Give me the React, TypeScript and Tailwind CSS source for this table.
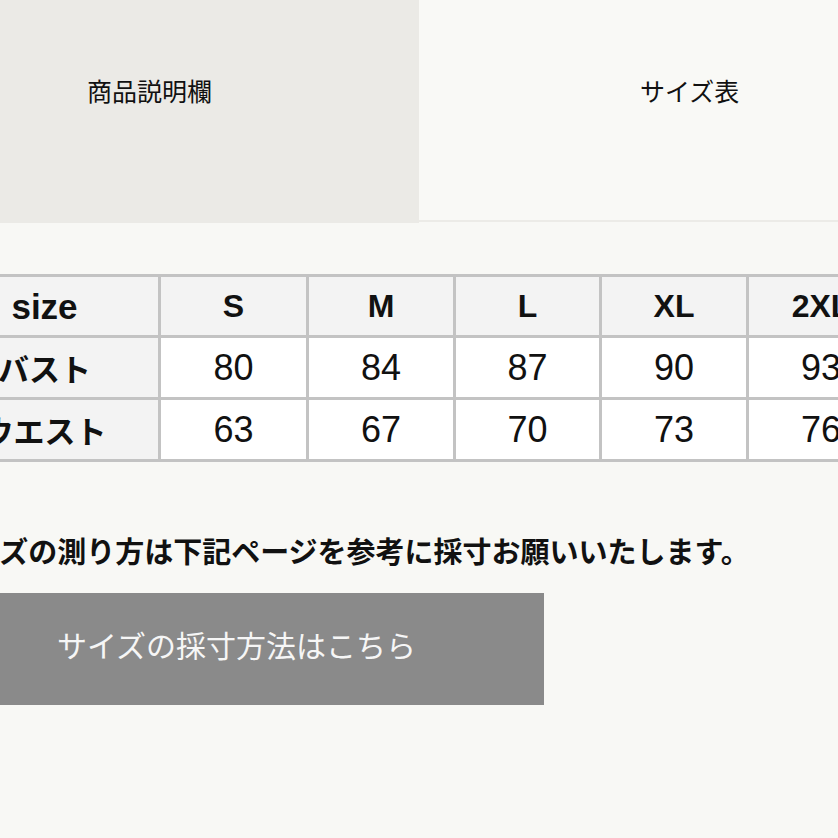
import React from 'react';

const sizes = ['S', 'M', 'L', 'XL', '2XL'];
const rows = [
    { label: 'バスト', values: ['80', '84', '87', '90', '93'] },
    { label: 'ウエスト', values: ['63', '67', '70', '73', '76'] },
];

const font = { fontFamily: '"Liberation Sans", "Noto Sans CJK JP", sans-serif' };
const jp = { fontFamily: '"Noto Sans CJK JP", sans-serif' };

export default function App() {
    return (
        <div className="w-[838px] h-[838px] overflow-hidden bg-[#f8f8f5] text-[#111]" style={font}>
            <div className="flex h-[223px]">
                <div className="w-[419px] bg-[#ebeae6] pl-[87px] pt-[78px]">
                    <span className="text-[25px] leading-none" style={jp}>商品説明欄</span>
                </div>
                <div className="flex-1 h-[222px] bg-[#f9f9f6] border-b-2 border-[#ecebe7] pl-[221px] pt-[78px]">
                    <span className="text-[25px] leading-none" style={jp}>サイズ表</span>
                </div>
            </div>

            <table className="ml-[-72px] mt-[51px] w-[965px] max-w-none border-collapse table-fixed">
                <colgroup>
                    <col className="w-[230px]" />
                    <col className="w-[148px]" />
                    <col className="w-[147px]" />
                    <col className="w-[146px]" />
                    <col className="w-[147px]" />
                    <col className="w-[147px]" />
                </colgroup>
                <tbody>
                    <tr>
                        <td className="h-[61px] border-[3px] border-[#c3c3c3] bg-[#f3f3f3] text-center text-[35px] leading-none font-bold">size</td>
                        {sizes.map((s) => (
                            <td key={s} className="border-[3px] border-[#c3c3c3] bg-[#f3f3f3] text-center text-[32px] leading-none font-bold">
                                {s}
                            </td>
                        ))}
                    </tr>
                    {rows.map((r) => (
                        <tr key={r.label}>
                            <td className="h-[62px] border-[3px] border-[#c3c3c3] bg-[#f3f3f3] text-center text-[31px] leading-none font-bold" style={jp}>
                                {r.label}
                            </td>
                            {r.values.map((v) => (
                                <td key={v} className="border-[3px] border-[#c3c3c3] bg-white text-center text-[36px] leading-none">
                                    {v}
                                </td>
                            ))}
                        </tr>
                    ))}
                </tbody>
            </table>

            <p className="ml-[-58px] mt-[74px] text-[29px] leading-none font-bold whitespace-nowrap" style={jp}>
                サイズの測り方は下記ページを参考に採寸お願いいたします。
            </p>

            <div className="mt-[28px] w-[544px] h-[112px] bg-[#8a8a8a] flex items-center pl-[57px] pb-[10px]">
                <span className="text-[30px] leading-none text-[#f6f6f6]" style={jp}>サイズの採寸方法はこちら</span>
            </div>
        </div>
    );
}
